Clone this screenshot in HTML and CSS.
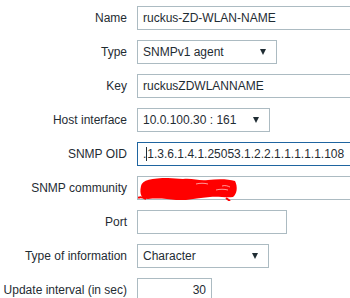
FILE: index.html
```html
<!DOCTYPE html>
<html lang="en">
<head>
    <meta charset="UTF-8">
    <title>Item - SNMP</title>
    <link rel="stylesheet" href="styles.css">
</head>
<body>

<div class="form">

    <label class="lbl">Name</label>
    <div class="field clip"><div class="input wide">ruckus-ZD-WLAN-NAME</div></div>

    <label class="lbl">Type</label>
    <div class="field"><div class="select w-type">SNMPv1 agent <span class="arrow"></span></div></div>

    <label class="lbl">Key</label>
    <div class="field clip"><div class="input wide">ruckusZDWLANNAME</div></div>

    <label class="lbl">Host interface</label>
    <div class="field"><div class="select w-host">10.0.100.30 : 161 <span class="arrow"></span></div></div>

    <label class="lbl">SNMP OID</label>
    <div class="field clip"><div class="input wide focus">.<span class="caret"></span>1.3.6.1.4.1.25053.1.2.2.1.1.1.1.1.108</div></div>

    <label class="lbl">SNMP community</label>
    <div class="field">
        <div class="field clip"><div class="input wide"></div></div>
        <!-- scribbled over in the original screenshot -->
        <svg class="scribble" viewBox="0 0 100 24" preserveAspectRatio="none">
            <path d="M3 9 C4 3 14 1 30 1 L45 2 C55 1 60 4 70 3 C80 2 90 2 97 4 C100 10 99 17 95 20 C88 21 80 19 72 20 C62 21 55 22 48 23 L38 23 C30 22 20 21 10 22 C4 22 1 18 3 9 Z" fill="#f00"/>
            <path d="M0 21 C3 19 6 21 8 22" stroke="#f00" stroke-width="2" fill="none"/>
            <path d="M88 21 L92 24" stroke="#f00" stroke-width="2" fill="none"/>
            <path d="M78 13 C82 12 86 12 90 13" stroke="#fff" stroke-width="0.6" fill="none"/>
            <path d="M58 7 C62 6 66 6 70 7" stroke="#fff" stroke-width="0.6" fill="none"/>
            <path d="M84 9 C87 8 90 9 92 10" stroke="#fff" stroke-width="0.6" fill="none"/>
        </svg>
    </div>

    <label class="lbl">Port</label>
    <div class="field"><div class="input w-port"></div></div>

    <label class="lbl">Type of information</label>
    <div class="field"><div class="select w-info">Character <span class="arrow"></span></div></div>

    <label class="lbl">Update interval (in sec)</label>
    <div class="field"><div class="input w-num num">30</div></div>

</div>

</body>
</html>
```

FILE: styles.css
```css
body {
    margin: 0;
    background-color: #ffffff;
    font-family: "Liberation Sans", Arial, sans-serif;
    font-size: 12px;
    color: #1f2c33;
    overflow: hidden;
}
.form {
    display: grid;
    grid-template-columns: 127px 1fr;
    grid-auto-rows: 24px;
    column-gap: 10px;
    row-gap: 10px;
    padding-top: 6px;
}
.lbl {
    display: flex;
    align-items: center;
    justify-content: flex-end;
    white-space: nowrap;
}
.field {
    position: relative;
    display: flex;
    min-width: 0;
}
.clip {
    overflow: hidden;
    flex: 1;
}
.input, .select {
    box-sizing: border-box;
    height: 24px;
    border: 1px solid #acbbc2;
    padding: 0 5px;
    display: flex;
    align-items: center;
    white-space: nowrap;
    background-color: #fff;
}
.wide {
    width: calc(100% + 20px);
    flex-shrink: 0;
}
.focus {
    border-color: #1f65a0;
}
.caret {
    display: inline-block;
    width: 1px;
    height: 14px;
    background-color: #1f2c33;
}
.select {
    justify-content: space-between;
    padding-right: 10px;
}
.arrow {
    width: 0;
    height: 0;
    border-left: 3.5px solid transparent;
    border-right: 3.5px solid transparent;
    border-top: 6px solid #1f2c33;
}
.w-type { width: 140px; }
.w-host { width: 133px; }
.w-info { width: 132px; }
.w-port { width: 150px; }
.w-num {
    width: 75px;
    justify-content: flex-end;
}
.scribble {
    position: absolute;
    left: 1px;
    top: 1px;
    width: 100px;
    height: 24px;
}
```
